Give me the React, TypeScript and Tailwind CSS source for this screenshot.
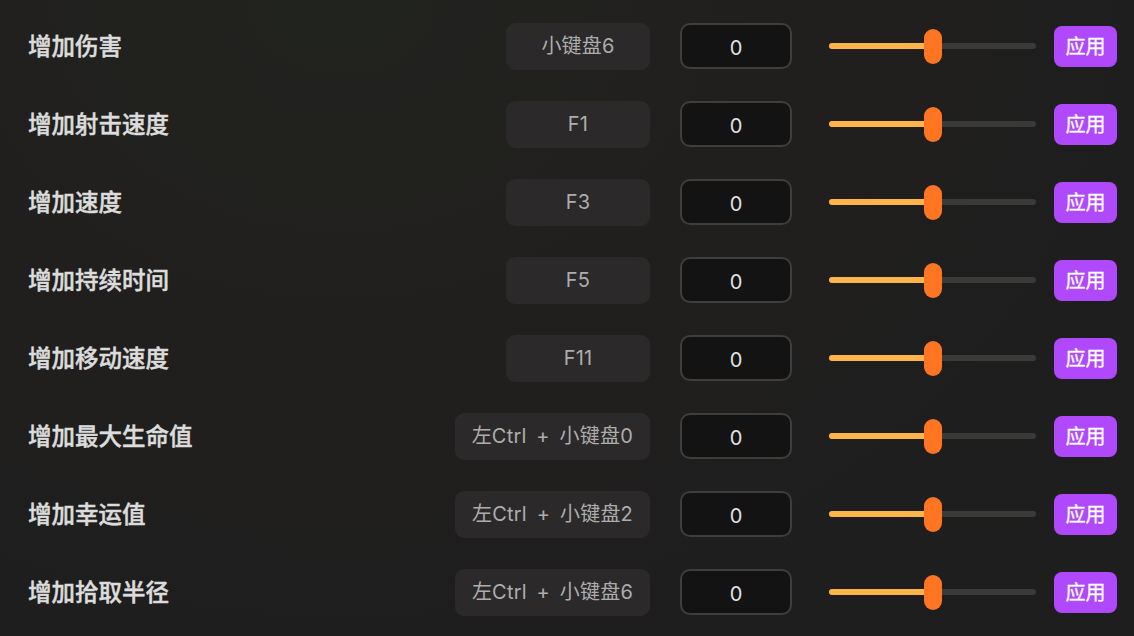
import { useState } from 'react'

interface Cheat {
  label: string
  hotkey: string
}

const cheats: Cheat[] = [
  { label: '增加伤害', hotkey: '小键盘6' },
  { label: '增加射击速度', hotkey: 'F1' },
  { label: '增加速度', hotkey: 'F3' },
  { label: '增加持续时间', hotkey: 'F5' },
  { label: '增加移动速度', hotkey: 'F11' },
  { label: '增加最大生命值', hotkey: '左Ctrl + 小键盘0' },
  { label: '增加幸运值', hotkey: '左Ctrl + 小键盘2' },
  { label: '增加拾取半径', hotkey: '左Ctrl + 小键盘6' },
]

function Slider({ value }: { value: number }) {
  return (
    <div className="relative h-[36px] w-[207px] flex items-center">
      <div className="h-[6px] w-full rounded-full bg-[#3a3a38]" />
      <div
        className="absolute left-0 h-[6px] rounded-full bg-[#ffb44a]"
        style={{ width: `${value}%` }}
      />
      <div
        className="absolute h-[35px] w-[18px] -translate-x-1/2 rounded-full bg-[#ff7522]"
        style={{ left: `${value}%` }}
      />
    </div>
  )
}

function Row({ cheat }: { cheat: Cheat }) {
  const [val] = useState('0')
  return (
    <div className="flex h-[78px] items-center pl-[28px] pr-[17px]">
      <div className="flex-1 font-['Noto_Sans_CJK_SC',sans-serif] text-[23.5px] font-medium text-[#dcdcdc] [-webkit-text-stroke:0.45px_#dcdcdc]">
        {cheat.label}
      </div>
      <div className="flex h-[47px] min-w-[144px] items-center justify-center rounded-[9px] bg-[#2b2929] px-[17px] text-[20px] tracking-[0.2px] text-[#adadad] [word-spacing:4px]">
        {cheat.hotkey}
      </div>
      <div className="ml-[30px] flex h-[46px] w-[112px] items-center justify-center rounded-[10px] border-2 border-[#3f3e3d] bg-[#141313] pt-[3px] text-[20px] text-[#e2e2e2]">
        {val}
      </div>
      <div className="ml-[37px]">
        <Slider value={50} />
      </div>
      <button className="ml-[18px] flex h-[41px] w-[63px] items-center justify-center rounded-[8px] bg-[#b048fb] font-['Noto_Sans_CJK_SC',sans-serif] text-[20px] text-white [-webkit-text-stroke:0.3px_#ffffff]">
        应用
      </button>
    </div>
  )
}

export default function App() {
  return (
    <div
      className="h-[636px] w-[1134px] overflow-hidden bg-[radial-gradient(ellipse_at_30%_0%,#21231f_0%,#211f1e_40%,#1e1e1e_75%)] pt-[7px]"
      style={{ fontFamily: '"Inter", "Noto Sans CJK SC", sans-serif' }}
    >
      {cheats.map((c) => (
        <Row key={c.label} cheat={c} />
      ))}
    </div>
  )
}
